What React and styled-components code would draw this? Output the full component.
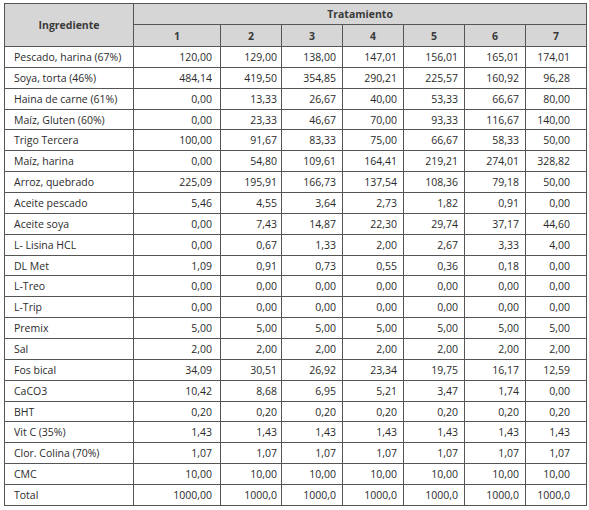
import React from "react";
import styled, { createGlobalStyle } from "styled-components";

const Global = createGlobalStyle`
  html, body { margin: 0; padding: 0; background: #ffffff; }
  body { font-family: "Open Sans", "Noto Sans", sans-serif; color: #2b2b2b; }
`;

const Page = styled.div`
  padding: 3px 0 0 4px;
`;

const Table = styled.table`
  border-collapse: collapse;
  table-layout: fixed;
  width: 582px;
  border: 1px solid #444;
  font-size: 10.5px;
  color: #2b2b2b;
`;

const HeadCell = styled.th`
  background: #d6d6d6;
  border: 1px solid #555;
  font-weight: 700;
  font-size: 10.5px;
  color: #3a3a3a;
  text-align: center;
  padding: 0;
  height: ${(p) => p.$h}px;
`;

const Row = styled.tr`
  height: 20.86px;
`;

const NameCell = styled.td`
  border: 1px solid #555;
  padding: 0 0 0 9px;
  text-align: left;
  white-space: nowrap;
  line-height: 14px;
`;

const NumCell = styled.td`
  border: 1px solid #555;
  padding: 0 ${(p) => p.$pr}px 0 0;
  text-align: right;
  white-space: nowrap;
  line-height: 14px;
`;

const rows = [
  ["Pescado, harina (67%)", "120,00", "129,00", "138,00", "147,01", "156,01", "165,01", "174,01"],
  ["Soya, torta (46%)", "484,14", "419,50", "354,85", "290,21", "225,57", "160,92", "96,28"],
  ["Haina de carne (61%)", "0,00", "13,33", "26,67", "40,00", "53,33", "66,67", "80,00"],
  ["Maíz, Gluten (60%)", "0,00", "23,33", "46,67", "70,00", "93,33", "116,67", "140,00"],
  ["Trigo Tercera", "100,00", "91,67", "83,33", "75,00", "66,67", "58,33", "50,00"],
  ["Maíz, harina", "0,00", "54,80", "109,61", "164,41", "219,21", "274,01", "328,82"],
  ["Arroz, quebrado", "225,09", "195,91", "166,73", "137,54", "108,36", "79,18", "50,00"],
  ["Aceite pescado", "5,46", "4,55", "3,64", "2,73", "1,82", "0,91", "0,00"],
  ["Aceite soya", "0,00", "7,43", "14,87", "22,30", "29,74", "37,17", "44,60"],
  ["L- Lisina HCL", "0,00", "0,67", "1,33", "2,00", "2,67", "3,33", "4,00"],
  ["DL Met", "1,09", "0,91", "0,73", "0,55", "0,36", "0,18", "0,00"],
  ["L-Treo", "0,00", "0,00", "0,00", "0,00", "0,00", "0,00", "0,00"],
  ["L-Trip", "0,00", "0,00", "0,00", "0,00", "0,00", "0,00", "0,00"],
  ["Premix", "5,00", "5,00", "5,00", "5,00", "5,00", "5,00", "5,00"],
  ["Sal", "2,00", "2,00", "2,00", "2,00", "2,00", "2,00", "2,00"],
  ["Fos bical", "34,09", "30,51", "26,92", "23,34", "19,75", "16,17", "12,59"],
  ["CaCO3", "10,42", "8,68", "6,95", "5,21", "3,47", "1,74", "0,00"],
  ["BHT", "0,20", "0,20", "0,20", "0,20", "0,20", "0,20", "0,20"],
  ["Vit C (35%)", "1,43", "1,43", "1,43", "1,43", "1,43", "1,43", "1,43"],
  ["Clor. Colina (70%)", "1,07", "1,07", "1,07", "1,07", "1,07", "1,07", "1,07"],
  ["CMC", "10,00", "10,00", "10,00", "10,00", "10,00", "10,00", "10,00"],
  ["Total", "1000,00", "1000,0", "1000,0", "1000,0", "1000,0", "1000,0", "1000,0"],
];

const widths = [129, 87, 61, 61, 61, 61, 61, 61];
const pads = [8, 4, 6, 6, 6, 6, 16];

export default function App() {
  return (
    <Page>
      <Global />
      <Table>
        <colgroup>
          {widths.map((w, i) => (
            <col key={i} style={{ width: w }} />
          ))}
        </colgroup>
        <thead>
          <tr>
            <HeadCell rowSpan={2} $h={20}>Ingrediente</HeadCell>
            <HeadCell colSpan={7} $h={20}>Tratamiento</HeadCell>
          </tr>
          <tr>
            {[1, 2, 3, 4, 5, 6, 7].map((n) => (
              <HeadCell key={n} $h={21}>{n}</HeadCell>
            ))}
          </tr>
        </thead>
        <tbody>
          {rows.map((r) => (
            <Row key={r[0]}>
              <NameCell>{r[0]}</NameCell>
              {r.slice(1).map((v, i) => (
                <NumCell key={i} $pr={pads[i]}>{v}</NumCell>
              ))}
            </Row>
          ))}
        </tbody>
      </Table>
    </Page>
  );
}
